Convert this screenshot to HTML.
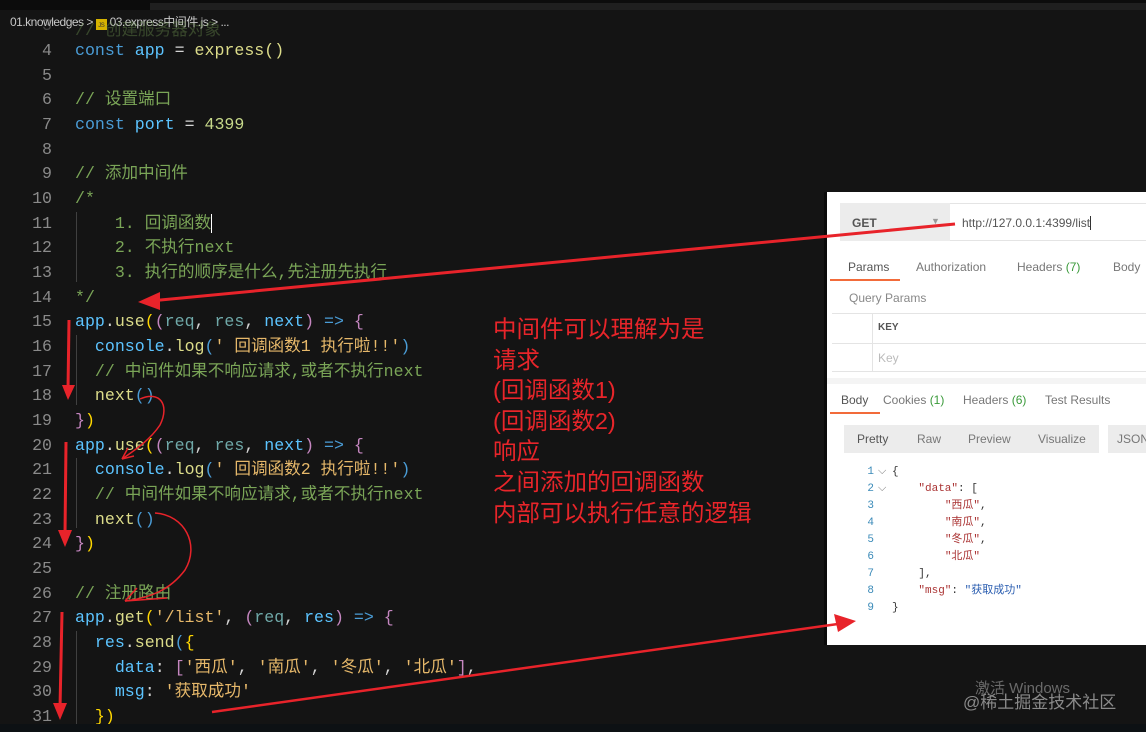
<!DOCTYPE html>
<html><head><meta charset="utf-8"><style>
*{margin:0;padding:0;box-sizing:border-box}
html,body{width:1146px;height:732px;overflow:hidden}
body{background:#141414;position:relative;font-family:"Liberation Sans","Noto Sans CJK SC",sans-serif}
.top{position:absolute;left:0;top:0;width:1146px;height:10px;background:#0c0c0c}
.top2{position:absolute;left:150px;top:3px;width:996px;height:7px;background:#1f1f1f}
.crumb{position:absolute;left:10px;top:13px;font-size:12px;color:#c8c8c8;letter-spacing:-0.5px}
.js{display:inline-block;width:11px;height:11px;background:#d6b300;color:#333;font-size:6px;vertical-align:-1px;text-align:center;line-height:14px}
.code{position:absolute;left:0;top:39px;font-family:"Liberation Mono","Noto Sans CJK SC",monospace;font-size:16.6px;line-height:24.67px;white-space:pre;color:#d4d4d4}
.ln{position:absolute;left:0;width:52px;text-align:right;color:#8a8a8a}
.tx{position:absolute;left:75px}
.k{color:#4a9cd6}.v{color:#5cc4ff}.f{color:#dcdc8a}.c{color:#7aa557}.s{color:#e6b86a}.n{color:#c7d98a}.p{color:#c586c0}.y{color:#ffd700}.w{color:#d4d4d4}.pm{color:#6fa8a8}
.guide{position:absolute;width:1px;background:#404040}
.ann{position:absolute;left:493px;top:314px;color:#e8252a;font-size:23.5px;line-height:30.6px;font-family:"Liberation Sans","Noto Sans CJK SC",sans-serif}
.pm-panel{position:absolute;left:824px;top:192px;width:322px;height:453px;background:#fff;border-left:3px solid #0a0a0a;font-size:12px;color:#777}
.a{position:absolute;white-space:nowrap}
.json{font-family:"Liberation Mono","Noto Sans CJK SC",monospace;font-size:11px}
.wm{position:absolute;color:#6a6a6a;font-size:15px}
</style></head><body>
<div class="top"></div><div class="top2"></div>
<div class="crumb">01.knowledges &gt; <span class="js">JS</span> 03.express中间件.js &gt; ...</div>
<div class="code">
<div class="ln" style="top:-24.67px;opacity:.4">3</div><div class="tx c" style="top:-20px;opacity:.35">// 创建服务器对象</div>
<div class="ln" style="top:0">4</div><div class="tx" style="top:0"><span class="k">const</span> <span class="v">app</span> <span class="w">=</span> <span class="f">express()</span></div>
<div class="ln" style="top:24.67px">5</div>
<div class="ln" style="top:49.34px">6</div><div class="tx c" style="top:49.34px">// 设置端口</div>
<div class="ln" style="top:74px">7</div><div class="tx" style="top:74px"><span class="k">const</span> <span class="v">port</span> <span class="w">=</span> <span class="n">4399</span></div>
<div class="ln" style="top:98.7px">8</div>
<div class="ln" style="top:123.4px">9</div><div class="tx c" style="top:123.4px">// 添加中间件</div>
<div class="ln" style="top:148px">10</div><div class="tx c" style="top:148px">/*</div>
<div class="ln" style="top:172.7px">11</div><div class="tx c" style="top:172.7px">    1. 回调函数<span style="border-left:1.5px solid #fff"></span></div>
<div class="ln" style="top:197.4px">12</div><div class="tx c" style="top:197.4px">    2. 不执行next</div>
<div class="ln" style="top:222px">13</div><div class="tx c" style="top:222px">    3. 执行的顺序是什么,先注册先执行</div>
<div class="ln" style="top:246.7px">14</div><div class="tx c" style="top:246.7px">*/</div>
<div class="ln" style="top:271.4px">15</div><div class="tx" style="top:271.4px"><span class="v">app</span>.<span class="f">use</span><span class="y">(</span><span class="p">(</span><span class="pm">req</span>, <span class="pm">res</span>, <span class="v">next</span><span class="p">)</span> <span class="k">=&gt;</span> <span class="p">{</span></div>
<div class="ln" style="top:296px">16</div><div class="tx" style="top:296px">  <span class="v">console</span>.<span class="f">log</span><span class="k">(</span><span class="s">' 回调函数1 执行啦!!'</span><span class="k">)</span></div>
<div class="ln" style="top:320.7px">17</div><div class="tx c" style="top:320.7px">  // 中间件如果不响应请求,或者不执行next</div>
<div class="ln" style="top:345.4px">18</div><div class="tx" style="top:345.4px">  <span class="f">next</span><span class="k">()</span></div>
<div class="ln" style="top:370px">19</div><div class="tx" style="top:370px"><span class="p">}</span><span class="y">)</span></div>
<div class="ln" style="top:394.7px">20</div><div class="tx" style="top:394.7px"><span class="v">app</span>.<span class="f">use</span><span class="y">(</span><span class="p">(</span><span class="pm">req</span>, <span class="pm">res</span>, <span class="v">next</span><span class="p">)</span> <span class="k">=&gt;</span> <span class="p">{</span></div>
<div class="ln" style="top:419.4px">21</div><div class="tx" style="top:419.4px">  <span class="v">console</span>.<span class="f">log</span><span class="k">(</span><span class="s">' 回调函数2 执行啦!!'</span><span class="k">)</span></div>
<div class="ln" style="top:444px">22</div><div class="tx c" style="top:444px">  // 中间件如果不响应请求,或者不执行next</div>
<div class="ln" style="top:468.7px">23</div><div class="tx" style="top:468.7px">  <span class="f">next</span><span class="k">()</span></div>
<div class="ln" style="top:493.4px">24</div><div class="tx" style="top:493.4px"><span class="p">}</span><span class="y">)</span></div>
<div class="ln" style="top:518px">25</div>
<div class="ln" style="top:542.7px">26</div><div class="tx c" style="top:542.7px">// 注册路由</div>
<div class="ln" style="top:567.4px">27</div><div class="tx" style="top:567.4px"><span class="v">app</span>.<span class="f">get</span><span class="y">(</span><span class="s">'/list'</span>, <span class="p">(</span><span class="pm">req</span>, <span class="v">res</span><span class="p">)</span> <span class="k">=&gt;</span> <span class="p">{</span></div>
<div class="ln" style="top:592px">28</div><div class="tx" style="top:592px">  <span class="v">res</span>.<span class="f">send</span><span class="k">(</span><span class="y">{</span></div>
<div class="ln" style="top:616.7px">29</div><div class="tx" style="top:616.7px">    <span class="v">data</span>: <span class="p">[</span><span class="s">'西瓜'</span>, <span class="s">'南瓜'</span>, <span class="s">'冬瓜'</span>, <span class="s">'北瓜'</span><span class="p">]</span>,</div>
<div class="ln" style="top:641.4px">30</div><div class="tx" style="top:641.4px">    <span class="v">msg</span>: <span class="s">'获取成功'</span></div>
<div class="ln" style="top:666px">31</div><div class="tx" style="top:666px">  <span class="y">})</span></div>
</div>
<div class="guide" style="left:76px;top:212px;height:70px"></div>
<div class="guide" style="left:76px;top:335px;height:70px"></div>
<div class="guide" style="left:76px;top:458px;height:70px"></div>
<div class="guide" style="left:76px;top:631px;height:95px"></div>
<div style="position:absolute;left:0;top:724px;width:1146px;height:8px;background:#0d1114"></div>

<div class="ann">中间件可以理解为是<br>请求<br>(回调函数1)<br>(回调函数2)<br>响应<br>之间添加的回调函数<br>内部可以执行任意的逻辑</div>

<div class="pm-panel">
 <div class="a" style="left:13px;top:11px;width:110px;height:38px;background:#ececec"></div>
 <div class="a" style="left:25px;top:24px;color:#555;font-weight:bold">GET</div>
 <div class="a" style="left:104px;top:24px;color:#999;font-size:9px">▼</div>
 <div class="a" style="left:123px;top:11px;width:200px;height:38px;border:1px solid #e4e4e4;border-left:none"></div>
 <div class="a" style="left:135px;top:24px;color:#555">http://127.0.0.1:4399/list<span style="border-left:1px solid #333"></span></div>
 <div class="a" style="left:21px;top:68px;color:#555">Params</div>
 <div class="a" style="left:3px;top:87px;width:70px;height:2px;background:#f26b3a"></div>
 <div class="a" style="left:89px;top:68px">Authorization</div>
 <div class="a" style="left:190px;top:68px">Headers <span style="color:#3a9a3a">(7)</span></div>
 <div class="a" style="left:286px;top:68px">Body</div>
 <div class="a" style="left:22px;top:99px;color:#888">Query Params</div>
 <div class="a" style="left:5px;top:121px;width:320px;height:1px;background:#e4e4e4"></div>
 <div class="a" style="left:5px;top:151px;width:320px;height:1px;background:#e4e4e4"></div>
 <div class="a" style="left:5px;top:179px;width:320px;height:1px;background:#e4e4e4"></div>
 <div class="a" style="left:45px;top:121px;width:1px;height:58px;background:#e4e4e4"></div>
 <div class="a" style="left:51px;top:130px;font-size:10px;font-weight:bold;color:#555">KEY</div>
 <div class="a" style="left:51px;top:159px;color:#bbb">Key</div>
 <div class="a" style="left:0;top:186px;width:322px;height:6px;background:#f4f4f4"></div>
 <div class="a" style="left:14px;top:201px;color:#555">Body</div>
 <div class="a" style="left:3px;top:220px;width:50px;height:2px;background:#f26b3a"></div>
 <div class="a" style="left:56px;top:201px">Cookies <span style="color:#3a9a3a">(1)</span></div>
 <div class="a" style="left:136px;top:201px">Headers <span style="color:#3a9a3a">(6)</span></div>
 <div class="a" style="left:218px;top:201px">Test Results</div>
 <div class="a" style="left:17px;top:233px;width:255px;height:28px;background:#ececec"></div>
 <div class="a" style="left:30px;top:240px;color:#555">Pretty</div>
 <div class="a" style="left:90px;top:240px">Raw</div>
 <div class="a" style="left:141px;top:240px">Preview</div>
 <div class="a" style="left:211px;top:240px">Visualize</div>
 <div class="a" style="left:281px;top:233px;width:45px;height:28px;background:#ececec"></div>
 <div class="a" style="left:290px;top:240px">JSON</div>
 <div class="a json" style="left:37px;top:272px;line-height:17px;color:#3a8ab8;text-align:right;width:10px">1<br>2<br>3<br>4<br>5<br>6<br>7<br>8<br>9</div>
 <div class="a json" style="left:51px;top:272px;line-height:17px;color:#777">⌵<br>⌵</div>
 <div class="a json" style="left:65px;top:272px;line-height:17px;color:#333;white-space:pre">{
    <span style="color:#a33">"data"</span>: [
        <span style="color:#a33">"西瓜"</span>,
        <span style="color:#a33">"南瓜"</span>,
        <span style="color:#a33">"冬瓜"</span>,
        <span style="color:#a33">"北瓜"</span>
    ],
    <span style="color:#a33">"msg"</span>: <span style="color:#2a5db0">"获取成功"</span>
}</div>
</div>

<div class="wm" style="left:975px;top:677px">激活 Windows</div>
<div class="wm" style="left:963px;top:688px;font-size:17px;color:#8a8a8a">@稀土掘金技术社区</div>

<svg width="1146" height="732" style="position:absolute;left:0;top:0" fill="none" stroke="#e8232a">
 <line x1="955" y1="224" x2="150" y2="301" stroke-width="3"/>
 <polygon points="138,302 160,292 160,310" fill="#e8232a" stroke="none"/>
 <line x1="212" y1="712" x2="845" y2="623" stroke-width="2.5"/>
 <polygon points="856,621 834,614 838,632" fill="#e8232a" stroke="none"/>
 <line x1="69" y1="320" x2="68" y2="390" stroke-width="3"/>
 <polygon points="62,385 75,385 68,400" fill="#e8232a" stroke="none"/>
 <line x1="66" y1="442" x2="65" y2="535" stroke-width="3"/>
 <polygon points="58,530 72,530 65,547" fill="#e8232a" stroke="none"/>
 <line x1="62" y1="612" x2="60" y2="708" stroke-width="3"/>
 <polygon points="53,703 67,703 60,720" fill="#e8232a" stroke="none"/>
 <path d="M140,399 C160,390 170,405 160,425 C150,440 135,450 122,459" stroke-width="1.5"/>
 <path d="M122,459 L128,448 M122,459 L134,456" stroke-width="1.5"/>
 <path d="M155,513 C185,515 200,545 185,570 C170,590 150,598 125,601" stroke-width="1.5"/>
 <path d="M125,601 L137,588 M125,601 L167,598" stroke-width="1.5"/>
</svg>
</body></html>
